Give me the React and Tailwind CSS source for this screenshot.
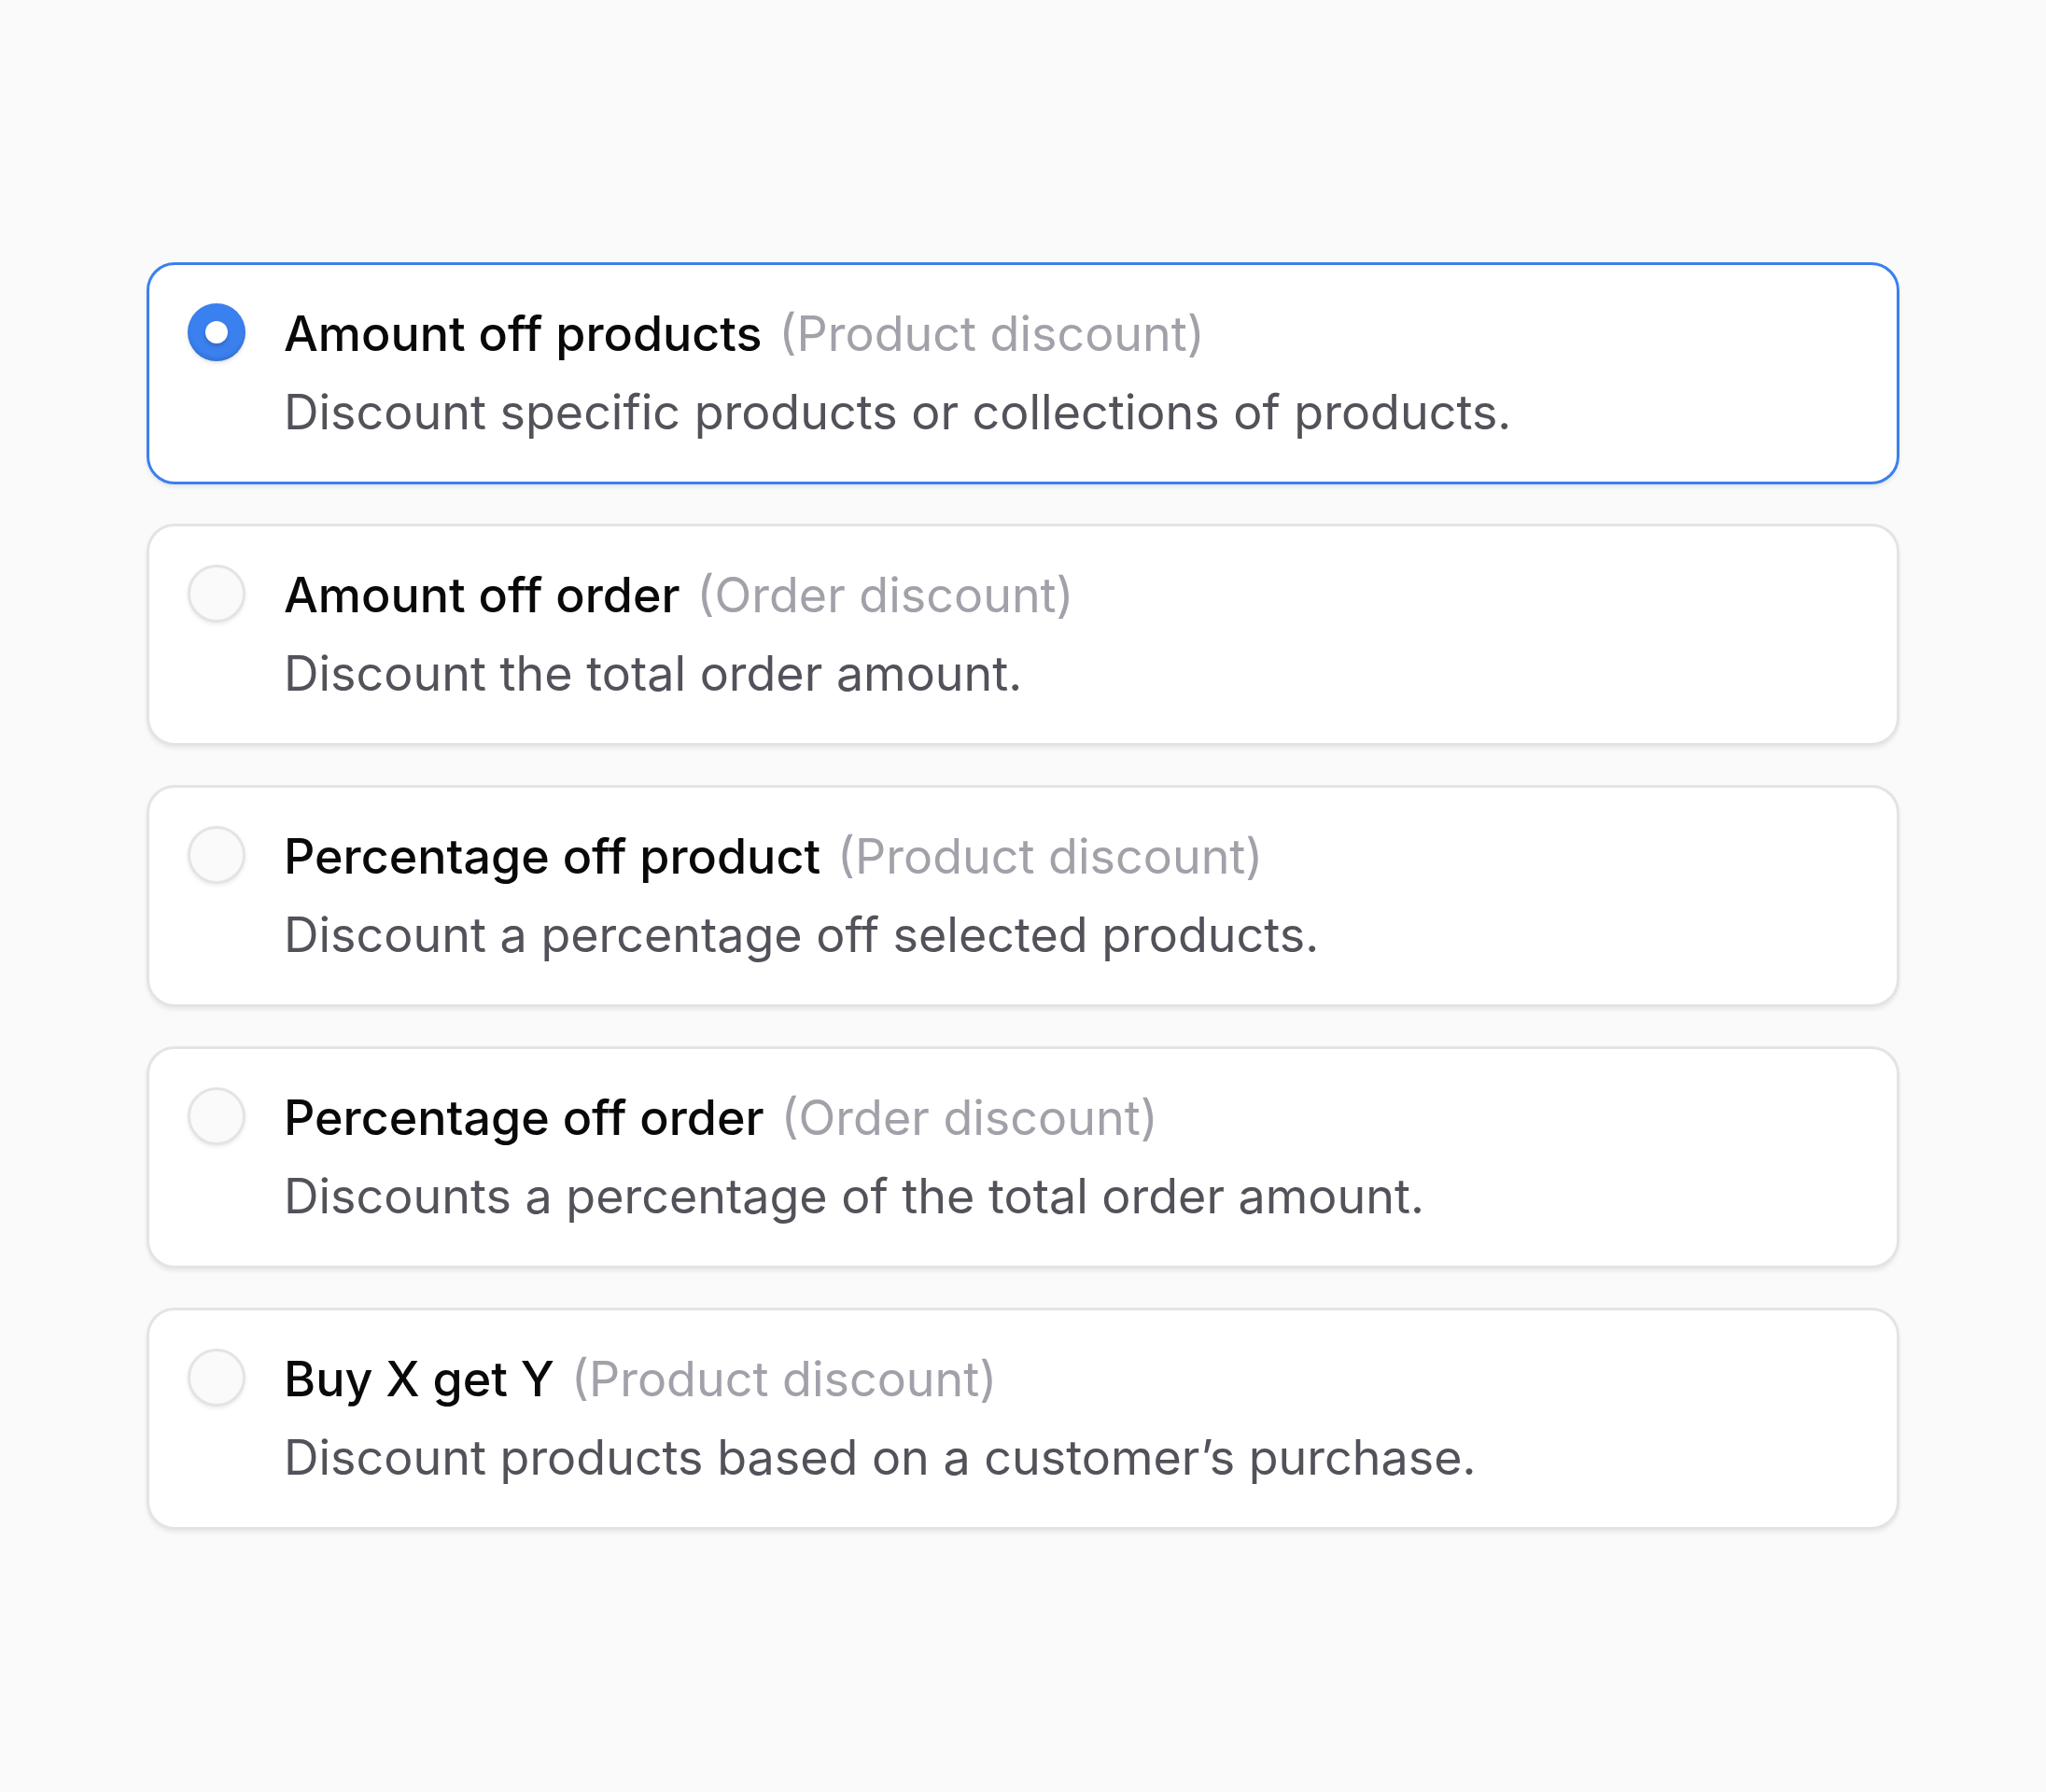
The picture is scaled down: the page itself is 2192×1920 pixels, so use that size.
import React from "react";

const options = [
  { title: "Amount off products", tag: "(Product discount)", desc: "Discount specific products or collections of products.", selected: true },
  { title: "Amount off order", tag: "(Order discount)", desc: "Discount the total order amount." },
  { title: "Percentage off product", tag: "(Product discount)", desc: "Discount a percentage off selected products." },
  { title: "Percentage off order", tag: "(Order discount)", desc: "Discounts a percentage of the total order amount." },
  { title: "Buy X get Y", tag: "(Product discount)", desc: "Discount products based on a customer\u2019s purchase." },
];

function Radio({ selected }) {
  if (selected) {
    return (
      <div className="mt-[9px] w-[62px] h-[62px] shrink-0 rounded-full bg-[#3b80ef] flex items-center justify-center shadow-[0_2px_4px_rgba(0,0,0,0.12),inset_0_-3px_4px_rgba(0,0,0,0.12)]">
        <div className="w-[24px] h-[24px] rounded-full bg-white shadow-[0_3px_4px_rgba(0,0,0,0.18)]" />
      </div>
    );
  }
  return (
    <div className="mt-[9px] w-[62px] h-[62px] shrink-0 rounded-full bg-[#fafafa] border-[3px] border-[#e4e4e7] shadow-[0_2px_4px_rgba(0,0,0,0.08)]" />
  );
}

export default function App() {
  return (
    <div className="min-h-[1920px] w-full bg-[#fafafa] pt-[281px] px-[157px] font-['Inter','Noto_Sans',sans-serif]">
      <div className="flex flex-col gap-[42px]">
        {options.map((o) => (
          <div
            key={o.title}
            className={
              "flex items-start gap-[41px] rounded-[30px] bg-white border-[3px] pl-[41px] pr-[40px] py-[32px] " +
              (o.selected
                ? "border-[#3b80ef] shadow-[0_3px_4px_rgba(0,0,0,0.08)]"
                : "border-[#e4e4e7] shadow-[0_3px_4px_rgba(0,0,0,0.07)]")
            }
          >
            <Radio selected={o.selected} />
            <div className="flex flex-col">
              <div className="text-[52px] leading-[84px] flex items-baseline">
                <span className="font-medium text-[#09090b]">{o.title}</span>
                <span className="ml-[18px] text-[#a1a1aa]">{o.tag}</span>
              </div>
              <div className="text-[52px] leading-[84px] text-[#52525b]">{o.desc}</div>
            </div>
          </div>
        ))}
      </div>
    </div>
  );
}
